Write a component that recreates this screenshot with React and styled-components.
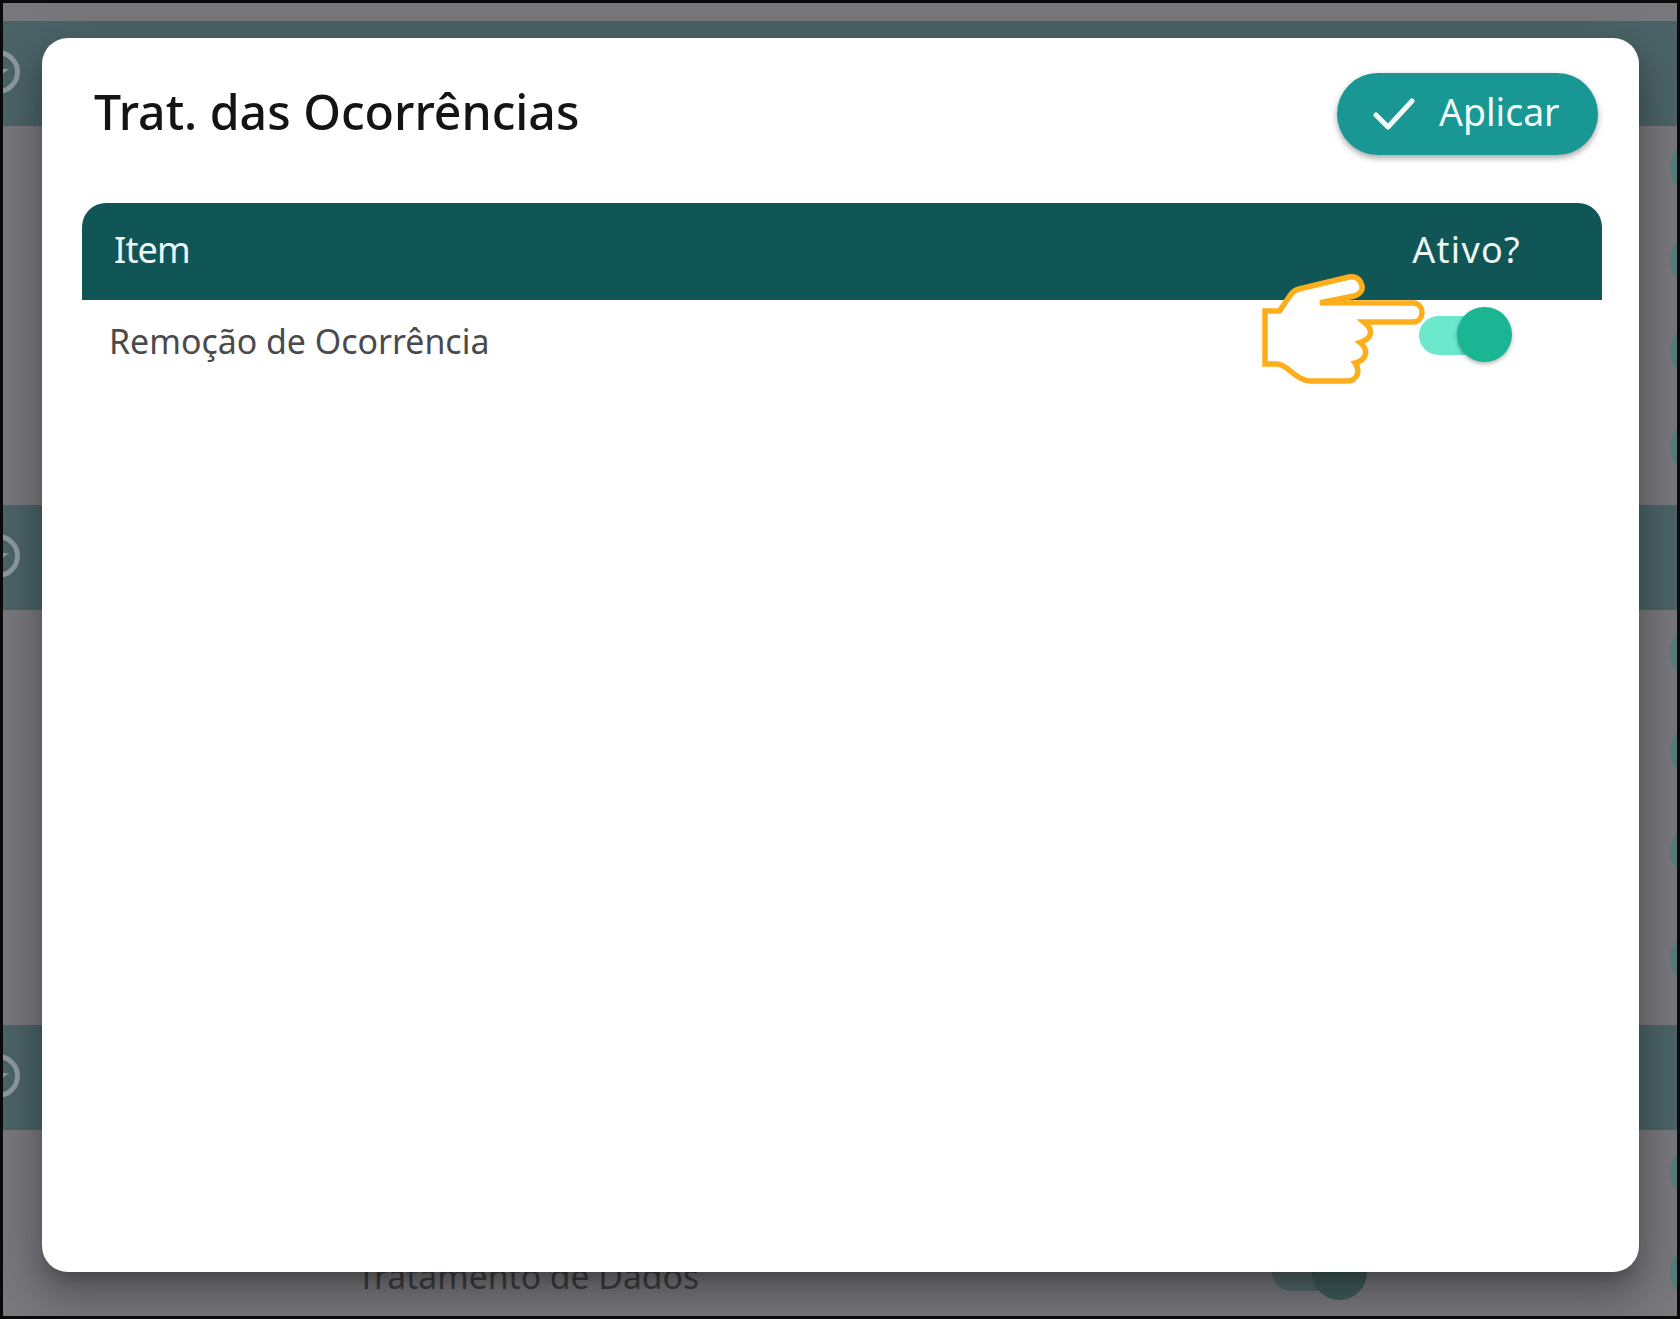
import styled, { createGlobalStyle } from 'styled-components';

const GlobalStyle = createGlobalStyle`
  html, body {
    margin: 0;
    padding: 0;
    background: #000;
  }
  * {
    box-sizing: border-box;
  }
`;

const Frame = styled.div`
  position: relative;
  width: 1680px;
  height: 1319px;
  padding-top: 18px;
  border: 3px solid #0a0a0a;
  background: #78777c;
  overflow: hidden;
  font-family: 'Noto Sans', 'Open Sans', sans-serif;
`;

const Band = styled.div`
  display: flex;
  align-items: flex-start;
  height: 105px;
  padding-top: 28px;
  background: #4b6367;
`;

const BandRing = styled.svg`
  width: 46px;
  height: 46px;
  margin-left: -28px;
  color: #8c9a9c;
`;

const Rows = styled.div`
  padding-top: ${({ $top }) => $top}px;
  height: ${({ $height }) => $height}px;
`;

const Row = styled.div`
  display: flex;
  align-items: flex-start;
  height: ${({ $height }) => $height}px;
  padding-left: 354px;
`;

const RowLabel = styled.span`
  margin-top: 9px;
  font-size: 33.7px;
  line-height: 44px;
  color: #3e3e43;
`;

const DimToggle = styled.div`
  position: relative;
  width: 95px;
  height: 55px;
  margin-left: auto;
  margin-right: 303px;
  &::before {
    content: '';
    position: absolute;
    left: 0;
    top: 7px;
    width: 80px;
    height: 39px;
    border-radius: 20px;
    background: #536868;
  }
  &::after {
    content: '';
    position: absolute;
    right: 0;
    top: 0;
    width: 55px;
    height: 55px;
    border-radius: 50%;
    background: #3f5b59;
  }
`;

const EdgeThumb = styled.div`
  flex: none;
  width: 55px;
  height: 55px;
  margin-left: ${({ $solo }) => ($solo ? 'auto' : '0')};
  margin-right: -48px;
  border-radius: 50%;
  background: #587c7c;
`;

const Modal = styled.div`
  position: absolute;
  left: 39px;
  top: 35px;
  width: 1597px;
  height: 1234px;
  padding: 35px 37px 0 40px;
  border-radius: 26px;
  background: #fff;
  box-shadow:
    0 11px 15px -7px rgba(0, 0, 0, 0.22),
    0 24px 38px 3px rgba(0, 0, 0, 0.2),
    0 9px 46px 8px rgba(0, 0, 0, 0.12);
`;

const ModalHeader = styled.div`
  display: flex;
  justify-content: space-between;
  align-items: flex-start;
  padding: 0 4px 0 12px;
  margin-bottom: 48px;
`;

const Title = styled.h1`
  margin: 6px 0 0;
  font-size: 48.2px;
  line-height: 64px;
  font-weight: 500;
  color: #141416;
`;

const ApplyButton = styled.button`
  display: flex;
  align-items: center;
  gap: 24px;
  width: 261px;
  height: 82px;
  padding: 0 0 0 36px;
  border: 0;
  border-radius: 41px;
  background: #189794;
  color: #f2fbfa;
  font-family: inherit;
  font-size: 37.4px;
  box-shadow: 0 3px 6px rgba(0, 0, 0, 0.35);
`;

const ButtonLabel = styled.span`
  margin-top: -6px;
`;

const TableHead = styled.div`
  display: flex;
  justify-content: space-between;
  align-items: center;
  height: 97px;
  padding: 0 81px 4px 32px;
  border-radius: 24px 24px 0 0;
  background: #115657;
  color: #eef6f5;
  font-size: 36px;
`;

const HeadCell = styled.span`
  letter-spacing: ${({ $spacing }) => $spacing}px;
`;

const TableRow = styled.div`
  display: flex;
  justify-content: space-between;
  align-items: flex-start;
  padding: 7px 90px 0 27px;
`;

const ItemName = styled.span`
  margin-top: 12px;
  font-size: 33.9px;
  line-height: 44px;
  color: #4a4a4d;
`;

const Toggle = styled.div`
  position: relative;
  width: 93px;
  height: 55px;
`;

const Track = styled.div`
  position: absolute;
  left: 0;
  top: 9px;
  width: 81px;
  height: 39px;
  border-radius: 20px;
  background: #6ce8cd;
`;

const Thumb = styled.div`
  position: absolute;
  right: 0;
  top: 0;
  width: 55px;
  height: 55px;
  border-radius: 50%;
  background: #1bb593;
  box-shadow: 0 2px 4px rgba(0, 0, 0, 0.3);
`;

const Hand = styled.svg`
  position: absolute;
  left: 1247px;
  top: 262px;
  width: 290px;
  height: 130px;
`;

const Ring = () => (
  <BandRing viewBox="0 0 46 46" fill="none" stroke="currentColor" strokeWidth="5">
    <circle cx="23" cy="23" r="19.5" />
    <path d="M16 20l9 7 9-7" fill="currentColor" stroke="none" />
  </BandRing>
);

const App = () => (
  <>
    <GlobalStyle />
    <Frame>
      <Band>
        <Ring />
      </Band>
      <Rows $top={14} $height={379}>
        <Row $height={92}><EdgeThumb $solo /></Row>
        <Row $height={92}><EdgeThumb $solo /></Row>
        <Row $height={96}><EdgeThumb $solo /></Row>
        <Row $height={70}><EdgeThumb $solo /></Row>
      </Rows>
      <Band>
        <Ring />
      </Band>
      <Rows $top={16} $height={415}>
        <Row $height={98}><EdgeThumb $solo /></Row>
        <Row $height={99}><EdgeThumb $solo /></Row>
        <Row $height={108}><EdgeThumb $solo /></Row>
        <Row $height={70}><EdgeThumb $solo /></Row>
      </Rows>
      <Band>
        <Ring />
      </Band>
      <Rows $top={14} $height={186}>
        <Row $height={101}><EdgeThumb $solo /></Row>
        <Row $height={70}>
          <RowLabel>Tratamento de Dados</RowLabel>
          <DimToggle />
          <EdgeThumb />
        </Row>
      </Rows>

      <Modal>
        <ModalHeader>
          <Title>Trat. das Ocorrências</Title>
          <ApplyButton>
            <svg width="42" height="34" viewBox="0 0 42 34" fill="none">
              <path d="M3 18l12 12L39 4" stroke="#f2fbfa" strokeWidth="5" strokeLinecap="round" strokeLinejoin="round" />
            </svg>
            <ButtonLabel>Aplicar</ButtonLabel>
          </ApplyButton>
        </ModalHeader>
        <TableHead>
          <HeadCell $spacing={-0.8}>Item</HeadCell>
          <HeadCell $spacing={1.3}>Ativo?</HeadCell>
        </TableHead>
        <TableRow>
          <ItemName>Remoção de Ocorrência</ItemName>
          <Toggle>
            <Track />
            <Thumb />
          </Toggle>
        </TableRow>
      </Modal>

      <Hand viewBox="0 0 290 130">
        <path
          d="M70 37.7L104 31C111 29 114 24 111 18C109 13 104 11 99 12L49 24C44 25 42 28 39 32L29.5 46L15 46L15 99L27 99C38 99 45 116 62 116L97 116C107 116 111 106 105 98C117 95 119 85 110 77.5C121 74 125 66 114 57L163 57C175 57 175 38 163 38Z"
          fill="#fff"
          stroke="#fdae1a"
          strokeWidth="5.5"
          strokeLinejoin="miter"
        />
      </Hand>
    </Frame>
  </>
);

export default App;
